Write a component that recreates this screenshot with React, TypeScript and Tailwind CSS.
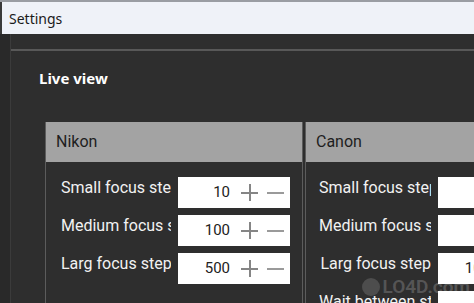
import React from 'react';

type Row = {label: string; value: string};

const nikon: Row[] = [
  {label: 'Small focus step', value: '10'},
  {label: 'Medium focus step', value: '100'},
  {label: 'Larg focus step', value: '500'}
];

const canon: Row[] = [
  {label: 'Small focus step', value: '1'},
  {label: 'Medium focus step', value: '5'},
  {label: 'Larg focus step', value: '100'},
  {label: 'Wait between steps', value: '2'}
];

function Stepper({value}: {value: string}) {
  return (
    <div className="flex h-[31px] w-[112px] shrink-0 items-center bg-white">
      <span className="w-[52px] text-right text-[15px] leading-none text-[#222]">{value}</span>
      <span className="relative ml-[11px] h-[17px] w-[17px]">
        <span className="absolute left-0 top-[8px] h-[2px] w-[17px] bg-[#858585]" />
        <span className="absolute left-[8px] top-0 h-[17px] w-[2px] bg-[#858585]" />
      </span>
      <span className="ml-[9px] h-[2px] w-[17px] bg-[#9a9a9a]" />
    </div>
  );
}

function SettingRow({row, labelWidth}: {row: Row; labelWidth: string}) {
  return (
    <div className="flex items-center">
      <div className={`${labelWidth} overflow-hidden whitespace-nowrap pb-[10px] text-right text-[16px] leading-[20px] text-[#f2f2f2]`}>
        {row.label}
      </div>
      <div className="ml-[7px]">
        <Stepper value={row.value} />
      </div>
    </div>
  );
}

function Group({
  title,
  rows,
  className,
  labelWidth
}: {
  title: string;
  rows: Row[];
  className: string;
  labelWidth: string;
}) {
  return (
    <div className={className}>
      <div className="flex h-[40px] items-center bg-[#a3a3a3] pl-[10px] text-[16px] text-[#1e1e1e]">{title}</div>
      <div className="flex flex-col gap-[7px] pt-[15px] pl-[15px]">
        {rows.map((row) => (
          <SettingRow key={row.label} row={row} labelWidth={labelWidth} />
        ))}
      </div>
    </div>
  );
}

export default function App() {
  return (
    <div className="relative h-[303px] w-[474px] overflow-hidden bg-[#2e2e2e] font-['Roboto',sans-serif]">
      <div className="h-[2px] bg-[#9a9da3]" />
      <div className="flex h-[32px] items-center border-l-2 border-[#3a3a3a] bg-[#eff2f8] pl-[7px] font-['Noto_Sans',sans-serif] text-[14px] text-[#1a1a1a]">
        Settings
      </div>
      <div className="flex h-[269px]">
        <div className="w-[11px] shrink-0 border-r border-[#3b3b3b] bg-[#292929]" />
        <div className="flex-1 pt-[15px]">
          <div className="h-[2px] bg-[#585858]" />
          <div className="pl-[28px] pt-[17px] font-['Noto_Sans',sans-serif] text-[15px] font-bold leading-[20px] text-white">
            Live view
          </div>
          <div className="ml-[34px] mt-[34px] flex">
            <Group
              title="Nikon"
              rows={nikon}
              labelWidth="w-[110px]"
              className="h-[200px] w-[258px] shrink-0 border-x border-[#5c5c5c]"
            />
            <Group
              title="Canon"
              rows={canon}
              labelWidth="w-[112px]"
              className="ml-[2px] h-[200px] w-[300px] shrink-0 border-l border-[#5c5c5c] [&>div:last-child]:pl-[13px]"
            />
          </div>
        </div>
      </div>
      <div className="absolute bottom-[2px] right-[4px] flex items-center gap-[2px] text-[19px] font-semibold text-white/20">
        <span className="h-[18px] w-[18px] rounded-full bg-white/15" />
        LO4D.com
      </div>
    </div>
  );
}
